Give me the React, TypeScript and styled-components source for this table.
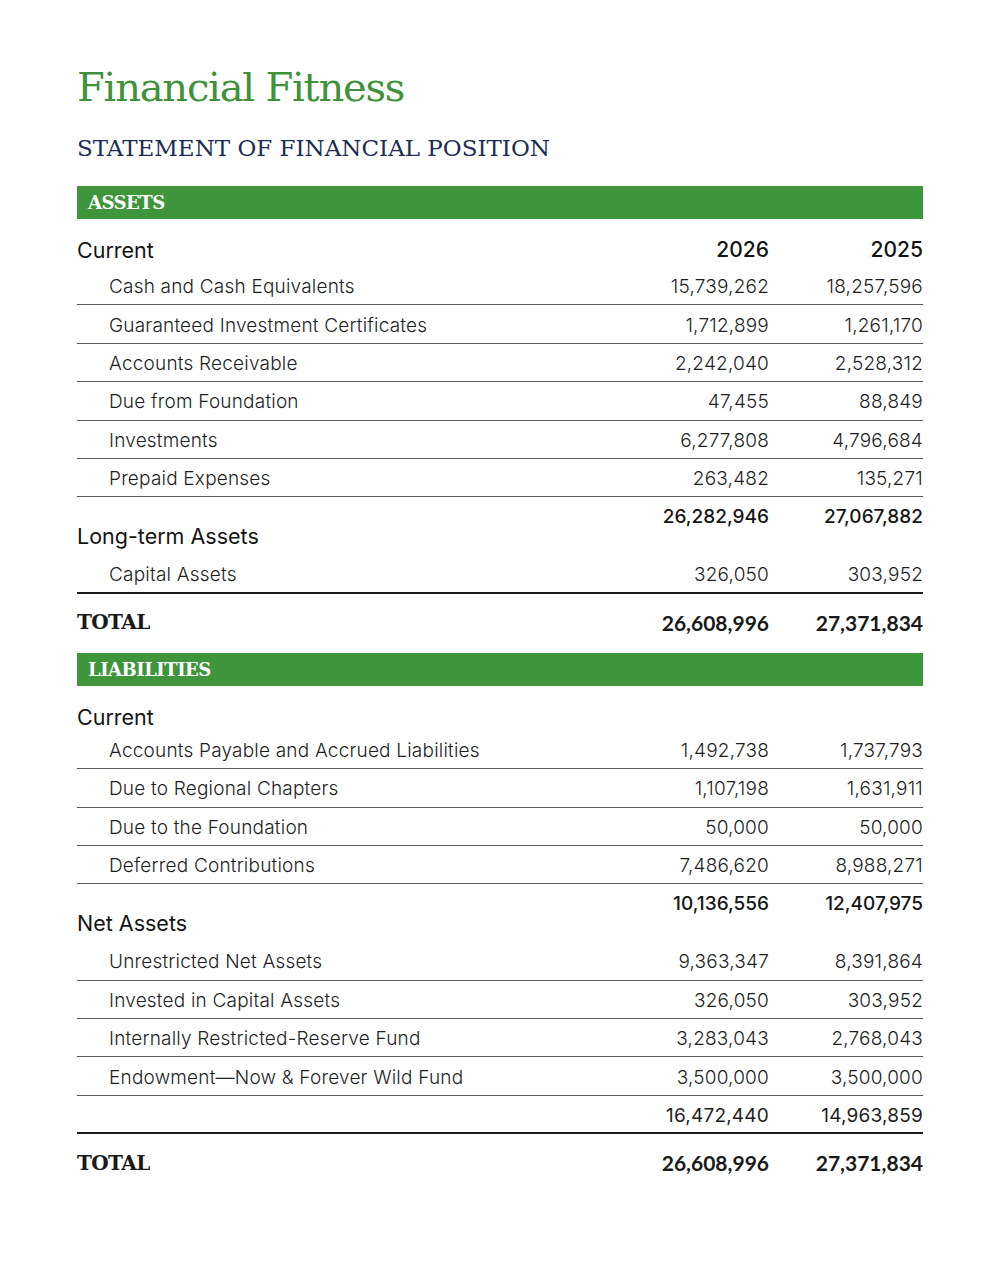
import React from "react";
import styled, { createGlobalStyle } from "styled-components";

const Global = createGlobalStyle`
  html, body { margin: 0; padding: 0; background: #ffffff; }
  body { font-family: Inter, "Noto Sans", sans-serif; color: #1b1b1b; }
`;

const Page = styled.div`
  width: 846px;
  margin: 0 auto;
  padding: 62px 0 80px;
`;

const Title = styled.h1`
  margin: 0;
  font-family: "DejaVu Serif", serif;
  font-weight: 400;
  font-size: 40px;
  letter-spacing: -1.2px;
  line-height: 50px;
  color: #3f913a;
`;

const Subtitle = styled.h2`
  margin: 21px 0 0;
  font-family: "DejaVu Serif", serif;
  font-weight: 400;
  font-size: 23px;
  letter-spacing: 0px;
  line-height: 30px;
  color: #1c2c55;
`;

const SectionBar = styled.div<{ $top: number }>`
  margin-top: ${(p) => p.$top}px;
  height: 33px;
  background: #3f953b;
  color: #ffffff;
  display: flex;
  align-items: center;
  padding-left: 11px;
  font-family: "DejaVu Serif", serif;
  font-weight: 700;
  font-size: 18px;
  letter-spacing: -0.5px;
`;

const Grid = styled.div`
  display: grid;
  grid-template-columns: 1fr 154px 154px;
`;

const HeaderRow = styled(Grid)<{ $h: number; $pt: number }>`
  height: ${(p) => p.$h}px;
  padding-top: ${(p) => p.$pt}px;
  align-items: start;
  box-sizing: border-box;
`;

const GroupLabel = styled.div`
  font-size: 21.5px;
  font-weight: 400;
  line-height: 26px;
  color: #141414;
`;

const YearCell = styled.div`
  font-size: 21px;
  font-weight: 500;
  line-height: 26px;
  text-align: right;
  color: #141414;
`;

const ItemRow = styled(Grid)<{ $strong?: boolean }>`
  height: 38.4px;
  box-sizing: border-box;
  border-bottom: ${(p) => (p.$strong ? "2px solid #1a1a1a" : "1px solid #5c5c5c")};
  align-items: center;
  padding-top: 2px;
`;

const ItemLabel = styled.div`
  padding-left: 32px;
  font-size: 19px;
  font-weight: 300;
  color: #1e1e1e;
  letter-spacing: 0.2px;
`;

const Num = styled.div<{ $weight?: number }>`
  font-size: 19px;
  font-weight: ${(p) => p.$weight ?? 300};
  letter-spacing: 0.2px;
  text-align: right;
  color: #1e1e1e;
`;

const SubtotalRow = styled(Grid)`
  height: 58px;
`;

const SubNum = styled.div`
  align-self: start;
  padding-top: 8px;
  font-size: 19px;
  font-weight: 500;
  text-align: right;
  color: #161616;
`;

const SubLabel = styled.div`
  align-self: end;
  padding-bottom: 6px;
  font-size: 21.5px;
  font-weight: 400;
  line-height: 26px;
  color: #141414;
`;

const TotalRow = styled(Grid)`
  height: 57px;
  align-items: center;
`;

const TotalLabel = styled.div`
  font-family: "DejaVu Serif", serif;
  font-weight: 700;
  font-size: 20px;
  letter-spacing: -0.6px;
  color: #1a1a1a;
`;

const TotalNum = styled.div`
  font-family: Lato, "Noto Sans", sans-serif;
  font-weight: 700;
  font-size: 21px;
  text-align: right;
  color: #1a1a1a;
`;

type Item = [string, string, string];

const Items: React.FC<{ items: Item[]; strongLast?: boolean }> = ({ items, strongLast }) => (
  <>
    {items.map(([label, a, b], i) => (
      <ItemRow key={label} $strong={strongLast && i === items.length - 1}>
        <ItemLabel>{label}</ItemLabel>
        <Num>{a}</Num>
        <Num>{b}</Num>
      </ItemRow>
    ))}
  </>
);

const assetsCurrent: Item[] = [
  ["Cash and Cash Equivalents", "15,739,262", "18,257,596"],
  ["Guaranteed Investment Certificates", "1,712,899", "1,261,170"],
  ["Accounts Receivable", "2,242,040", "2,528,312"],
  ["Due from Foundation", "47,455", "88,849"],
  ["Investments", "6,277,808", "4,796,684"],
  ["Prepaid Expenses", "263,482", "135,271"],
];

const liabCurrent: Item[] = [
  ["Accounts Payable and Accrued Liabilities", "1,492,738", "1,737,793"],
  ["Due to Regional Chapters", "1,107,198", "1,631,911"],
  ["Due to the Foundation", "50,000", "50,000"],
  ["Deferred Contributions", "7,486,620", "8,988,271"],
];

const netAssets: Item[] = [
  ["Unrestricted Net Assets", "9,363,347", "8,391,864"],
  ["Invested in Capital Assets", "326,050", "303,952"],
  ["Internally Restricted-Reserve Fund", "3,283,043", "2,768,043"],
  ["Endowment\u2014Now & Forever Wild Fund", "3,500,000", "3,500,000"],
];

export default function App() {
  return (
    <>
      <Global />
      <Page>
        <Title>Financial Fitness</Title>
        <Subtitle>STATEMENT OF FINANCIAL POSITION</Subtitle>

        <SectionBar $top={23}>ASSETS</SectionBar>
        <HeaderRow $h={48} $pt={18}>
          <GroupLabel>Current</GroupLabel>
          <YearCell>2026</YearCell>
          <YearCell>2025</YearCell>
        </HeaderRow>
        <Items items={assetsCurrent} />
        <SubtotalRow>
          <SubLabel>Long-term Assets</SubLabel>
          <SubNum>26,282,946</SubNum>
          <SubNum>27,067,882</SubNum>
        </SubtotalRow>
        <Items items={[["Capital Assets", "326,050", "303,952"]]} strongLast />
        <TotalRow>
          <TotalLabel>TOTAL</TotalLabel>
          <TotalNum>26,608,996</TotalNum>
          <TotalNum>27,371,834</TotalNum>
        </TotalRow>

        <SectionBar $top={2}>LIABILITIES</SectionBar>
        <HeaderRow $h={45} $pt={18}>
          <GroupLabel>Current</GroupLabel>
          <div />
          <div />
        </HeaderRow>
        <Items items={liabCurrent} />
        <SubtotalRow>
          <SubLabel>Net Assets</SubLabel>
          <SubNum>10,136,556</SubNum>
          <SubNum>12,407,975</SubNum>
        </SubtotalRow>
        <Items items={netAssets} />
        <ItemRow $strong>
          <div />
          <Num $weight={400}>16,472,440</Num>
          <Num $weight={400}>14,963,859</Num>
        </ItemRow>
        <TotalRow>
          <TotalLabel>TOTAL</TotalLabel>
          <TotalNum>26,608,996</TotalNum>
          <TotalNum>27,371,834</TotalNum>
        </TotalRow>
      </Page>
    </>
  );
}
